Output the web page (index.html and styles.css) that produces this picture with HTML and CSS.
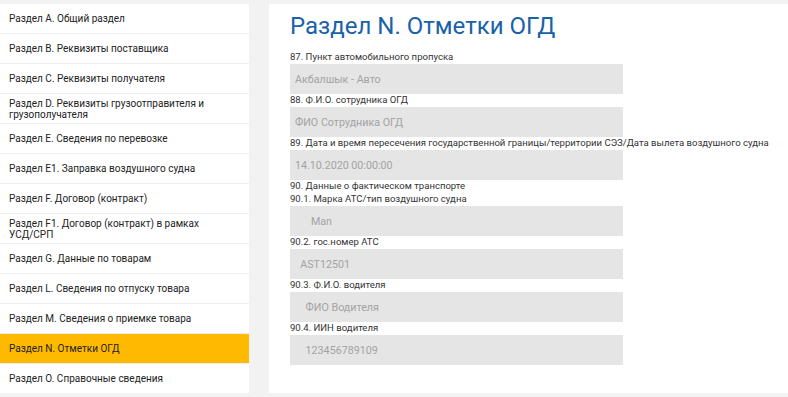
FILE: index.html
```html
<!DOCTYPE html>
<html>
<head>
<meta charset="UTF-8">
<title>Раздел N. Отметки ОГД</title>
<link rel="stylesheet" href="styles.css">
</head>
<body>
<div class="layout">
  <ul class="sections">
    <li>Раздел А. Общий раздел</li>
    <li>Раздел B. Реквизиты поставщика</li>
    <li>Раздел C. Реквизиты получателя</li>
    <li>Раздел D. Реквизиты грузоотправителя и грузополучателя</li>
    <li>Раздел E. Сведения по перевозке</li>
    <li>Раздел E1. Заправка воздушного судна</li>
    <li>Раздел F. Договор (контракт)</li>
    <li>Раздел F1. Договор (контракт) в рамках УСД/СРП</li>
    <li>Раздел G. Данные по товарам</li>
    <li>Раздел L. Сведения по отпуску товара</li>
    <li>Раздел M. Сведения о приемке товара</li>
    <li class="active">Раздел N. Отметки ОГД</li>
    <li>Раздел O. Справочные сведения</li>
  </ul>
  <div class="content">
    <h1>Раздел N. Отметки ОГД</h1>
    <label class="caption">87. Пункт автомобильного пропуска</label>
    <input class="field" readonly value="Акбалшык - Авто">
    <label class="caption">88. Ф.И.О. сотрудника ОГД</label>
    <input class="field" readonly value="ФИО Сотрудника ОГД">
    <label class="caption">89. Дата и время пересечения государственной границы/территории СЭЗ/Дата вылета воздушного судна</label>
    <input class="field" readonly value="14.10.2020 00:00:00">
    <label class="caption">90. Данные о фактическом транспорте</label>
    <label class="caption">90.1. Марка АТС/тип воздушного судна</label>
    <input class="field" readonly value="      Man">
    <label class="caption">90.2. гос.номер АТС</label>
    <input class="field" readonly value="  AST12501">
    <label class="caption">90.3. Ф.И.О. водителя</label>
    <input class="field" readonly value="    ФИО Водителя">
    <label class="caption">90.4. ИИН водителя</label>
    <input class="field" readonly value="    123456789109">
  </div>
</div>
</body>
</html>
```

FILE: styles.css
```css
body {
	margin: 0;
	padding: 4px 0;
	background-color: #f2f2f2;
	font-family: Roboto, "Liberation Sans", Arial, sans-serif;
}

.layout {
	display: flex;
	height: 389px;
}

.sections {
	flex: 0 0 249px;
	margin: 0;
	padding: 0;
	list-style: none;
	background-color: #fff;
}

.sections li {
	display: flex;
	align-items: center;
	height: 29px;
	padding: 0 40px 0 9px;
	border-bottom: 1px solid #efefef;
	font-size: 10px;
	line-height: 11px;
	color: #222;
}

.sections li:last-child {
	border-bottom: 0;
}

.sections li.active {
	background-color: #ffb900;
}

.content {
	flex: 1;
	margin-left: 20px;
	padding: 7px 0 0 21px;
	background-color: #fff;
}

h1 {
	margin: 0 0 10px 0;
	font-size: 24px;
	font-weight: 400;
	line-height: 30px;
	color: #1a62a8;
}

.caption {
	display: block;
	height: 13px;
	font-size: 9.55px;
	line-height: 12px;
	color: #333;
	white-space: nowrap;
}

.field {
	display: block;
	box-sizing: border-box;
	width: 333px;
	height: 30px;
	margin: 0;
	padding: 0 5px;
	border: 0;
	outline: 0;
	background-color: #e5e5e5;
	font-family: Roboto, "Liberation Sans", Arial, sans-serif;
	font-size: 10.7px;
	color: #a3a3a3;
}
```
